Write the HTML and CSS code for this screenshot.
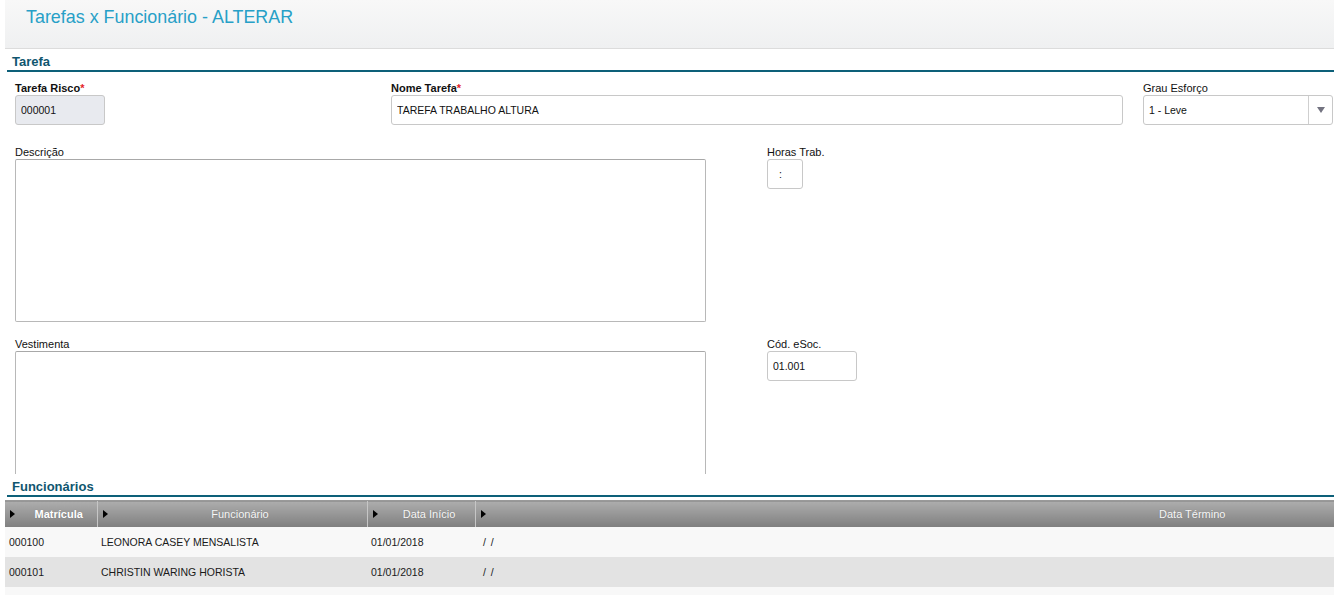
FILE: index.html
```html
<!DOCTYPE html>
<html lang="pt-BR">
<head>
  <meta charset="UTF-8">
  <meta name="viewport" content="width=device-width, initial-scale=1.0">
  <title>Tarefas x Funcionário - ALTERAR</title>
  <link rel="stylesheet" href="styles.css">
</head>
<body>
  <div class="page-header">
    <h1>Tarefas x Funcionário - ALTERAR</h1>
  </div>

  <div class="section-title">Tarefa</div>

  <div class="form-area">
    <div class="row row-top">
      <div class="field">
        <label class="req">Tarefa Risco<span class="star">*</span></label>
        <input class="input input-code" type="text" value="000001" disabled>
      </div>
      <div class="field">
        <label class="req">Nome Tarefa<span class="star">*</span></label>
        <input class="input input-name" type="text" value="TAREFA TRABALHO ALTURA">
      </div>
      <div class="field">
        <label>Grau Esforço</label>
        <div class="select">
          <span class="select-value">1 - Leve</span>
          <span class="select-btn"><span class="arrow"></span></span>
        </div>
      </div>
    </div>

    <div class="row row-mid">
      <div class="field">
        <label>Descrição</label>
        <textarea class="memo"></textarea>
      </div>
      <div class="field">
        <label>Horas Trab.</label>
        <input class="input input-hours" type="text" value=":">
      </div>
    </div>

    <div class="row row-mid row-last">
      <div class="field">
        <label>Vestimenta</label>
        <textarea class="memo"></textarea>
      </div>
      <div class="field">
        <label>Cód. eSoc.</label>
        <input class="input input-esoc" type="text" value="01.001">
      </div>
    </div>
  </div>

  <div class="section-title">Funcionários</div>

  <table class="grid">
    <colgroup>
      <col class="c-mat">
      <col class="c-func">
      <col class="c-ini">
      <col>
    </colgroup>
    <thead>
      <tr>
        <th><div class="th"><span class="tri"></span><span class="th-label sorted">Matrícula</span></div></th>
        <th><div class="th"><span class="tri"></span><span class="th-label">Funcionário</span></div></th>
        <th><div class="th"><span class="tri"></span><span class="th-label">Data Início</span></div></th>
        <th><div class="th"><span class="tri"></span><span class="th-label th-last">Data Término</span></div></th>
      </tr>
    </thead>
    <tbody>
      <tr>
        <td>000100</td>
        <td>LEONORA CASEY MENSALISTA</td>
        <td>01/01/2018</td>
        <td class="empty-date">/ /</td>
      </tr>
      <tr>
        <td>000101</td>
        <td>CHRISTIN WARING HORISTA</td>
        <td>01/01/2018</td>
        <td class="empty-date">/ /</td>
      </tr>
      <tr>
        <td></td>
        <td></td>
        <td></td>
        <td></td>
      </tr>
    </tbody>
  </table>
</body>
</html>
```

FILE: styles.css
```css
body {
    font-family: "Liberation Sans", Arial, sans-serif;
    font-size: 11px;
    color: #222;
    background-color: #fff;
    margin: 0;
    padding: 0 0 0 5px;
    height: 595px;
    overflow: hidden;
}

.page-header {
    height: 48px;
    background: linear-gradient(#f8f8f8, #eff0f1);
    border-bottom: 1px solid #dcdcdc;
}

.page-header h1 {
    margin: 0;
    padding: 6px 0 0 21px;
    font-size: 17.9px;
    font-weight: normal;
    line-height: 22px;
    color: #27a0c7;
}

.section-title {
    margin-left: 2px;
    height: 21px;
    padding-left: 5px;
    font-size: 13px;
    font-weight: bold;
    line-height: 26px;
    color: #0f566f;
    border-bottom: 2px solid #0d6079;
}

.form-area {
    height: 402px;
    padding: 9px 1px 0 10px;
    box-sizing: border-box;
    overflow: hidden;
}

.row {
    display: grid;
    grid-template-columns: 752px 1fr;
}

.row-top {
    grid-template-columns: 376px 752px 1fr;
}

.row-mid {
    margin-top: 20px;
}

.row-last {
    margin-top: 15px;
}

.field {
    display: flex;
    flex-direction: column;
    align-items: flex-start;
}

.field label {
    height: 14px;
    line-height: 14px;
    color: #111;
}

.field label.req {
    font-weight: bold;
}

.star {
    color: #e4252b;
}

.input {
    box-sizing: border-box;
    height: 30px;
    padding: 0 5px;
    border: 1px solid #c8c8c8;
    border-radius: 3px;
    font-family: "Liberation Sans", Arial, sans-serif;
    font-size: 10.5px;
    color: #111;
    background-color: #fff;
    outline: none;
}

.input-code {
    width: 90px;
    background-color: #e8eaef;
    color: #111;
    -webkit-text-fill-color: #111;
    opacity: 1;
}

.input-name {
    width: 732px;
}

.input-hours {
    width: 36px;
    padding-left: 11px;
}

.input-esoc {
    width: 90px;
}

.select {
    box-sizing: border-box;
    width: 190px;
    height: 30px;
    display: flex;
    align-items: stretch;
    border: 1px solid #c8c8c8;
    border-radius: 3px;
}

.select-value {
    flex: 1;
    padding-left: 5px;
    line-height: 28px;
    font-size: 10.5px;
    color: #111;
}

.select-btn {
    width: 23px;
    border-left: 1px solid #cfcfcf;
    display: flex;
    align-items: center;
    justify-content: center;
}

.arrow {
    width: 0;
    height: 0;
    border-left: 4px solid transparent;
    border-right: 4px solid transparent;
    border-top: 6px solid #737380;
}

.memo {
    box-sizing: border-box;
    width: 691px;
    height: 163px;
    margin: 0;
    border: 1px solid #b8b8b8;
    border-top-color: #a8a8a8;
    border-radius: 2px;
    resize: none;
    outline: none;
}

.grid {
    width: 1329px;
    margin-top: 3px;
    border-collapse: collapse;
    table-layout: fixed;
    font-size: 10.5px;
}

.c-mat { width: 92px; }
.c-func { width: 270px; }
.c-ini { width: 108px; }

.grid th {
    height: 26px;
    padding: 0;
    border-top: 1px solid #999;
    border-left: 1px solid #c6c6c6;
    background: linear-gradient(#adadad, #7f7f7f);
    font-weight: normal;
    font-size: 11px;
    color: #f7f7f7;
    text-shadow: 0 0 1px rgba(60, 60, 60, 0.35);
}

.grid th:first-child {
    border-left: none;
}

.th {
    display: flex;
    align-items: center;
}

.tri {
    width: 0;
    height: 0;
    margin-left: 5px;
    border-top: 4px solid transparent;
    border-bottom: 4px solid transparent;
    border-left: 5px solid #000;
}

.th-label {
    flex: 1;
    padding-left: 6px;
    text-align: center;
}

.th-label.sorted {
    font-weight: bold;
    color: #fff;
}

.th-label.th-last {
    padding-left: 565px;
}

.grid td {
    height: 30px;
    padding: 0 0 0 4px;
    white-space: nowrap;
    overflow: hidden;
    color: #1a1a1a;
}

.grid td.empty-date {
    padding-left: 8px;
    word-spacing: 2px;
}

.grid tbody tr:nth-child(odd) {
    background-color: #f8f8f8;
}

.grid tbody tr:nth-child(even) {
    background-color: #e3e3e3;
}
```
